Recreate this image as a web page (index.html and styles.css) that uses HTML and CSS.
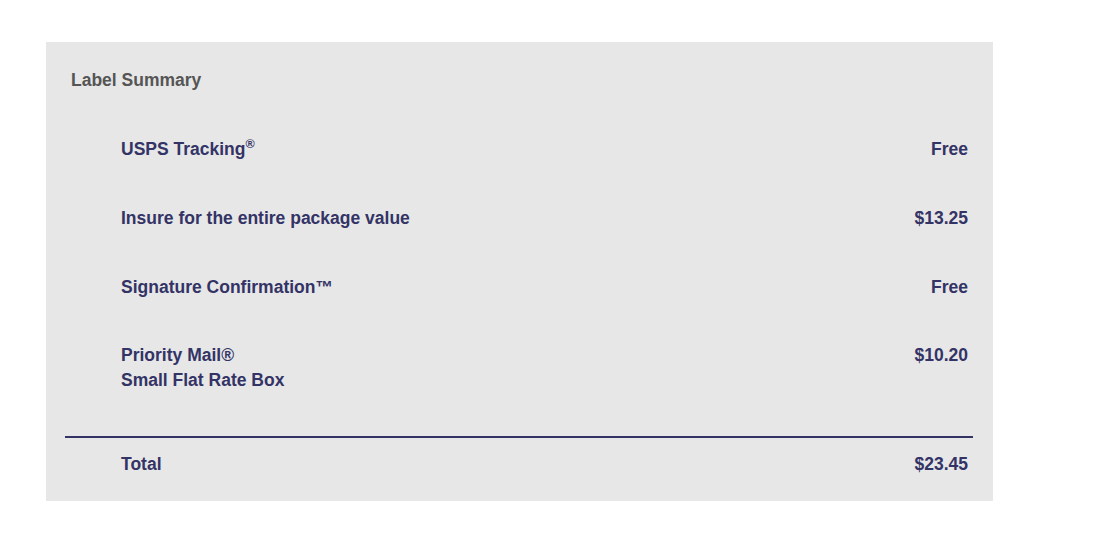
FILE: index.html
```html
<!DOCTYPE html>
<html>
<head>
<meta charset="utf-8">
<link rel="stylesheet" href="styles.css">
</head>
<body>
<section class="panel">
  <h2 class="title">Label Summary</h2>
  <div class="rows">
    <div class="row"><span>USPS Tracking<sup class="reg">®</sup></span><span>Free</span></div>
    <div class="row"><span>Insure for the entire package value</span><span>$13.25</span></div>
    <div class="row"><span>Signature Confirmation™</span><span>Free</span></div>
    <div class="row row-multi"><span>Priority Mail®<br>Small Flat Rate Box</span><span>$10.20</span></div>
  </div>
  <hr class="divider">
  <div class="row total"><span>Total</span><span>$23.45</span></div>
</section>
</body>
</html>
```
FILE: styles.css
```css
html, body {
  margin: 0;
  padding: 0;
  background: #ffffff;
}
body {
  font-family: "Liberation Sans", Arial, sans-serif;
  font-size: 17.5px;
  line-height: 25px;
  font-weight: 700;
}
.panel {
  margin: 42px 0 0 46px;
  width: 947px;
  box-sizing: border-box;
  padding: 26px 25px 24px;
  background: #e7e7e7;
}
.title {
  margin: 0;
  font-size: 17.5px;
  line-height: 25px;
  color: #555555;
}
.rows {
  display: flex;
  flex-direction: column;
  gap: 44px;
  margin-top: 44px;
}
.row {
  display: flex;
  justify-content: space-between;
  align-items: flex-start;
  padding-left: 50px;
  color: #333366;
}
.row-multi {
  margin-top: -1px;
}
.reg {
  font-size: 12.5px;
  line-height: 0;
  vertical-align: 7px;
}
.divider {
  margin: 43px -5px 0 -6px;
  border: 0;
  border-top: 2px solid #333366;
  height: 0;
}
.total {
  margin-top: 14px;
}
```
